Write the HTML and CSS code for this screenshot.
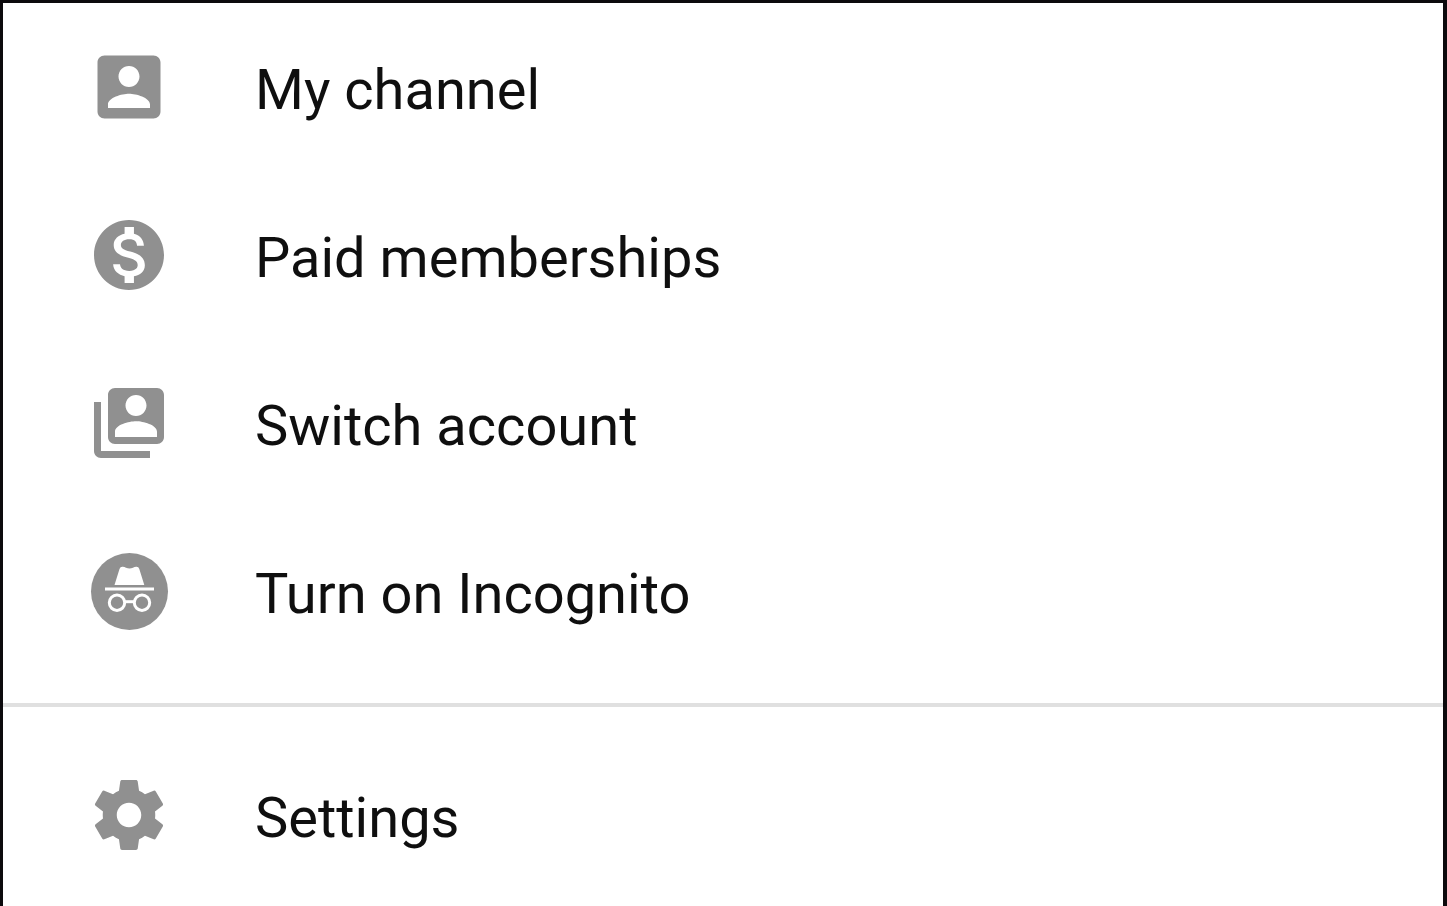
FILE: index.html
```html
<!DOCTYPE html>
<html lang="en">
<head>
<meta charset="utf-8">
<title>Account menu</title>
<link rel="stylesheet" href="styles.css">
</head>
<body>
<nav class="menu" aria-label="Account">
  <div class="group">
    <button class="item" type="button">
      <svg class="icon" viewBox="0 0 24 24" aria-hidden="true"><path d="M3 5v14c0 1.100.89 2 2 2h14c1.100 0 2-.9 2-2V5c0-1.100-.9-2-2-2H5c-1.110 0-2 .9-2 2zm12 4c0 1.660-1.340 3-3 3s-3-1.340-3-3 1.340-3 3-3 3 1.340 3 3zm-9 8c0-2 4-3.100 6-3.100s6 1.100 6 3.100v1H6v-1z"/></svg>
      <span class="label">My channel</span>
    </button>
    <button class="item" type="button">
      <svg class="icon" viewBox="0 0 24 24" aria-hidden="true"><path d="M12 2C6.480 2 2 6.480 2 12s4.480 10 10 10 10-4.480 10-10S17.520 2 12 2zm1.410 16.090V20h-2.670v-1.930c-1.710-.36-3.160-1.460-3.270-3.400h1.960c.1 1.050.82 1.870 2.650 1.870 1.960 0 2.400-.98 2.400-1.590 0-.83-.44-1.610-2.670-2.140-2.480-.6-4.180-1.620-4.180-3.670 0-1.720 1.390-2.840 3.110-3.210V4h2.670v1.950c1.860.45 2.790 1.860 2.850 3.390H14.300c-.05-1.110-.64-1.870-2.220-1.870-1.500 0-2.400.68-2.400 1.640 0 .84.65 1.390 2.670 1.910s4.180 1.390 4.180 3.910c-.01 1.830-1.380 2.830-3.120 3.160z"/></svg>
      <span class="label">Paid memberships</span>
    </button>
    <button class="item" type="button">
      <svg class="icon" viewBox="0 0 24 24" aria-hidden="true"><path d="M4 6H2v14c0 1.100.9 2 2 2h14v-2H4V6zm16-4H8c-1.100 0-2 .9-2 2v12c0 1.100.9 2 2 2h12c1.100 0 2-.9 2-2V4c0-1.100-.9-2-2-2zm-6 2c1.660 0 3 1.340 3 3s-1.340 3-3 3-3-1.340-3-3 1.340-3 3-3zm6 12H8v-1.500c0-1.990 4-3 6-3s6 1.010 6 3V16z"/></svg>
      <span class="label">Switch account</span>
    </button>
    <button class="item" type="button">
      <svg class="icon" viewBox="0 0 84 84" aria-hidden="true"><circle cx="42.500" cy="42.500" r="38.500"/><g class="cutout"><path d="M27.500 36l5-16q.8-2.600 3.300-2.300 1.800.2 3.200 1.100 3.500 1.600 7 0 1.400-.9 3.200-1.100 2.300-.3 3.100 2.300l5 16zM18 38.500h49v3H18z"/><g class="glasses"><circle cx="30" cy="53.700" r="7.700"/><circle cx="55" cy="53.700" r="7.700"/><path d="M37.500 52.700h10"/></g></g></svg>
      <span class="label">Turn on Incognito</span>
    </button>
  </div>
  <div class="group">
    <button class="item" type="button">
      <svg class="icon" viewBox="0 0 24 24" aria-hidden="true"><path d="M19.430 12.980c.04-.32.07-.64.07-.98s-.03-.66-.07-.98l2.110-1.650c.19-.15.24-.42.12-.64l-2-3.460c-.12-.22-.39-.3-.61-.22l-2.490 1c-.52-.4-1.080-.73-1.690-.98l-.38-2.650C14.460 2.180 14.250 2 14 2h-4c-.25 0-.46.18-.49.42l-.38 2.650c-.61.25-1.170.59-1.690.98l-2.490-1c-.23-.09-.49 0-.61.22l-2 3.460c-.13.22-.07.49.12.64l2.110 1.650c-.04.32-.07.65-.07.98s.03.66.07.98l-2.110 1.650c-.19.15-.24.42-.12.64l2 3.460c.12.22.39.3.61.22l2.490-1c.52.4 1.080.73 1.690.98l.38 2.650c.03.24.24.42.49.42h4c.25 0 .46-.18.49-.42l.38-2.650c.61-.25 1.170-.59 1.690-.98l2.490 1c.23.09.49 0 .61-.22l2-3.460c.12-.22.07-.49-.12-.64l-2.110-1.650zM12 15.500c-1.930 0-3.500-1.570-3.500-3.500s1.570-3.500 3.500-3.500 3.500 1.570 3.500 3.500-1.570 3.500-3.500 3.500z"/></svg>
      <span class="label">Settings</span>
    </button>
  </div>
</nav>
</body>
</html>
```

FILE: styles.css
```css
* {
  box-sizing: border-box;
}

body {
  margin: 0;
  background: #fff;
  font-family: Roboto, "Liberation Sans", sans-serif;
}

.menu {
  min-height: 100vh;
  border: 3px solid #0c0a0d;
  border-right-width: 4px;
  border-bottom: 0;
}

.group {
  display: flex;
  flex-direction: column;
  padding-bottom: 28px;
}

.group + .group {
  padding: 24px 0 0;
  border-top: 4px solid #e0e0e0;
}

.item {
  display: flex;
  align-items: center;
  gap: 84px;
  width: 100%;
  height: 168px;
  padding: 0 84px;
  border: 0;
  background: none;
  color: #0f0f0f;
  font: inherit;
  font-size: 56px;
  line-height: 64px;
  text-align: left;
  cursor: pointer;
}

.label {
  padding-top: 6px;
}

.icon {
  flex: none;
  width: 84px;
  height: 84px;
  fill: #909090;
}

.cutout {
  fill: #fff;
}

.glasses {
  fill: none;
  stroke: #fff;
  stroke-width: 3px;
}
```
